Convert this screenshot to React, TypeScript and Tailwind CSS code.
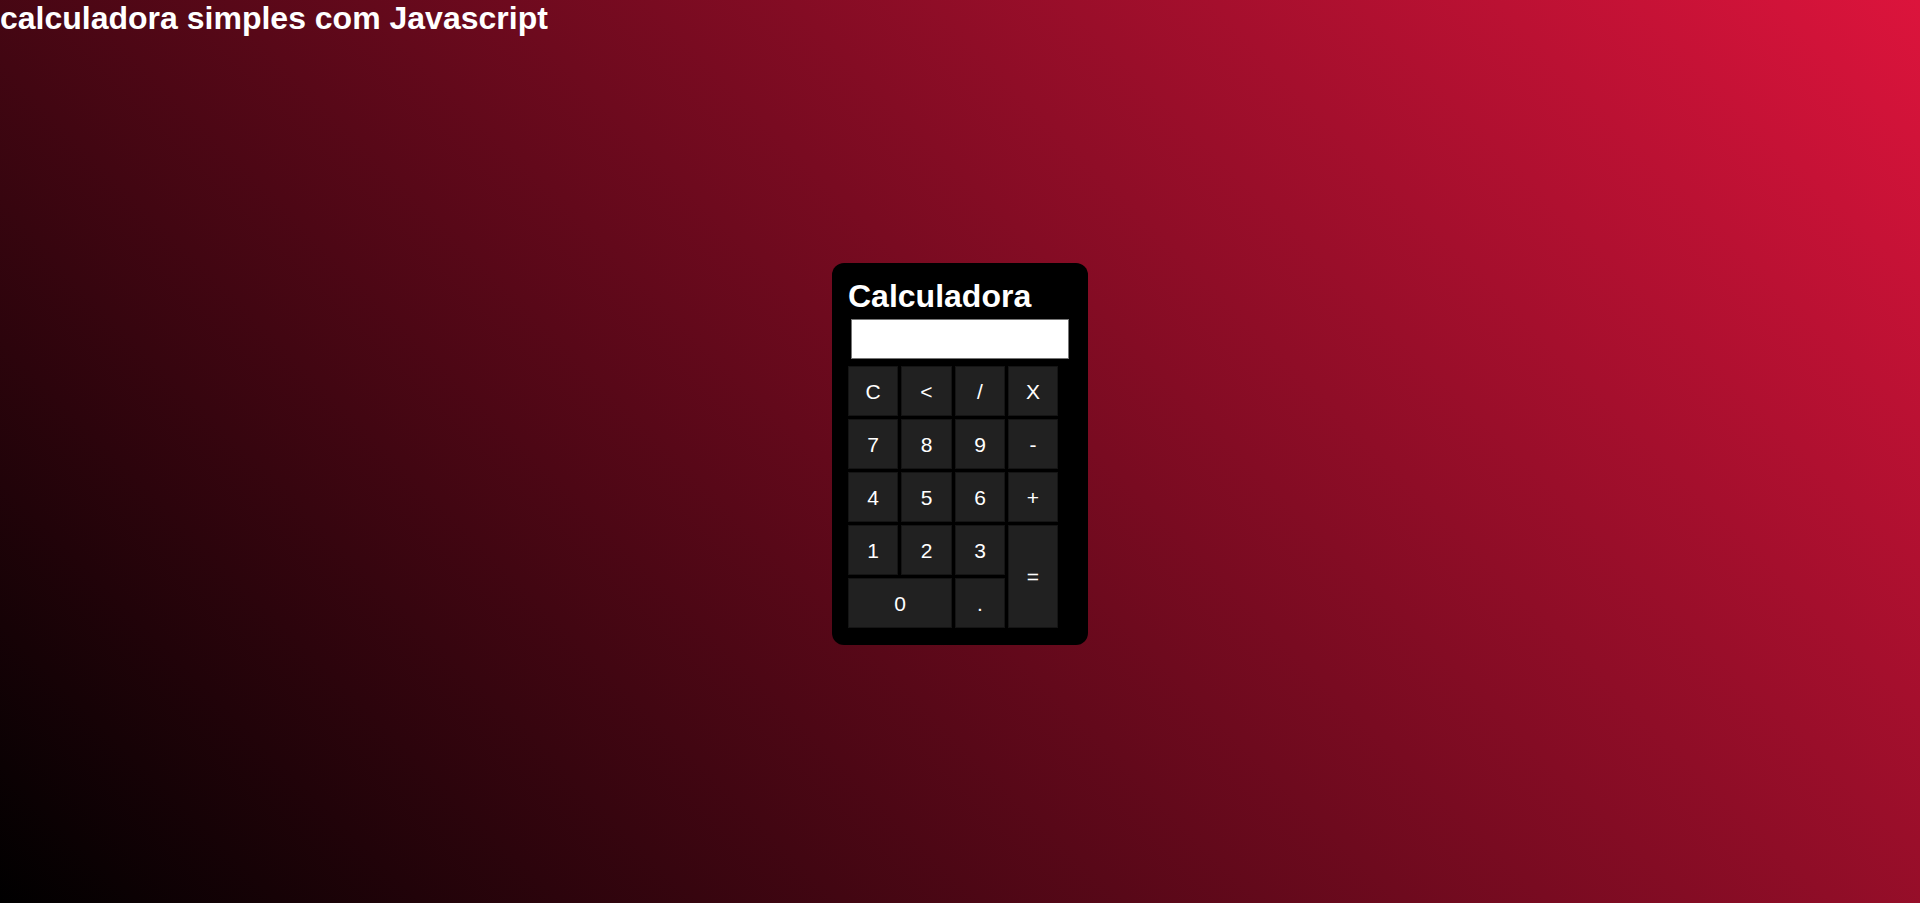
const keys = [
  { label: "C", cls: "" },
  { label: "<", cls: "" },
  { label: "/", cls: "" },
  { label: "X", cls: "" },
  { label: "7", cls: "" },
  { label: "8", cls: "" },
  { label: "9", cls: "" },
  { label: "-", cls: "" },
  { label: "4", cls: "" },
  { label: "5", cls: "" },
  { label: "6", cls: "" },
  { label: "+", cls: "" },
  { label: "1", cls: "" },
  { label: "2", cls: "" },
  { label: "3", cls: "" },
  { label: "=", cls: "row-span-2" },
  { label: "0", cls: "col-span-2" },
  { label: ".", cls: "" },
]

const App = () => {
  return (
    <div
      className="h-screen flex flex-col text-white
        bg-[linear-gradient(45deg,#000,#dc143c)]
        font-['Liberation_Sans',Arial,sans-serif]"
    >
      <h1 className="text-[32px] font-bold leading-[37px]">
        calculadora simples com Javascript
      </h1>
      <div className="flex-1 flex items-center justify-center pb-[32px]">
        <div className="w-[256px] bg-black rounded-xl pt-[15px] pb-[17px] pl-[16px]">
          <h1 className="text-[32px] font-bold leading-[37px]">Calculadora</h1>
          <div className="ml-[3px] mt-[4px] w-[218px] h-[40px] bg-white border border-[#767676]"></div>
          <div
            className="mt-[7px] grid grid-cols-[50px_51px_50px_50px]
              auto-rows-[50px] gap-x-[3px] gap-y-[3px]"
          >
            {keys.map((k) => (
              <button
                key={k.label}
                className={`${k.cls} flex items-center justify-center pt-[1px]
                  bg-[#212121] border border-[#151515] text-white text-[21px]`}
              >
                {k.label}
              </button>
            ))}
          </div>
        </div>
      </div>
    </div>
  )
}

export default App
